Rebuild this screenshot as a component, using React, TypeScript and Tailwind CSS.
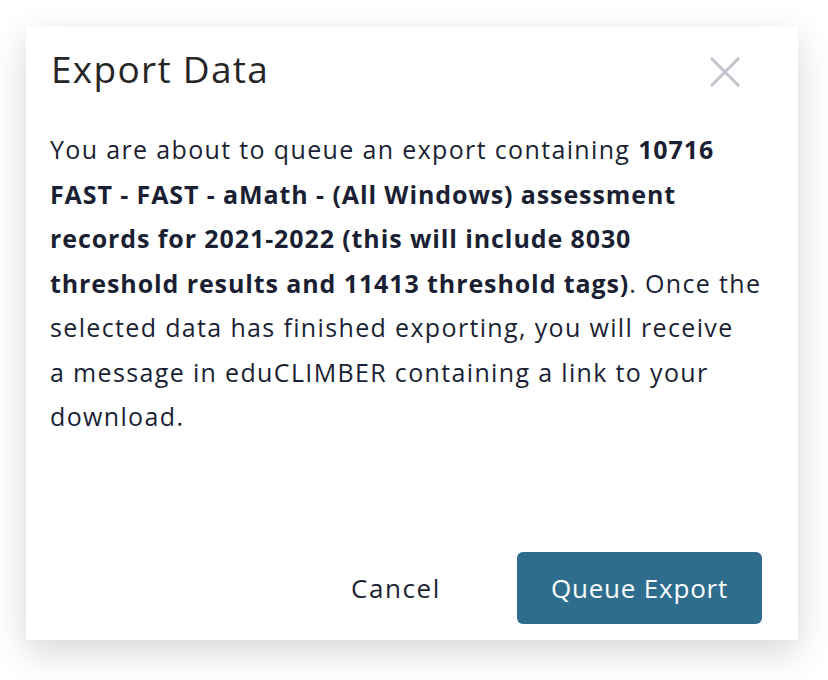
import React from 'react';

function CloseIcon() {
  return (
    <svg width="30" height="30" viewBox="0 0 30 30" fill="none" stroke="#c3c3d0" strokeWidth="3" strokeLinecap="square">
      <path d="M2 2L28 28M28 2L2 28" />
    </svg>
  );
}

export default function App() {
  return (
    <div className="min-h-[680px] w-[828px] bg-white pt-[27px] pl-[26px]" style={{ fontFamily: '"Open Sans", Lato, sans-serif' }}>
      <div className="flex h-[613px] w-[772px] flex-col bg-white shadow-[0_12px_34px_rgba(0,0,0,0.16)]">
        <div className="flex items-start justify-between pl-[25px] pr-[58px] pt-[18px]">
          <h2 className="text-[37px] leading-[48px] tracking-[1.3px] text-[#262626]">Export Data</h2>
          <button className="mt-[12px]" aria-label="Close">
            <CloseIcon />
          </button>
        </div>
        <p className="mt-[34px] pl-[24px] pr-[14px] text-[25px] leading-[44.5px] tracking-[1.35px] text-[#1b1f33]">
          You are about to queue an export containing <b className="font-bold tracking-[0.9px]">10716</b>
          <br />
          <b className="font-bold tracking-[0.9px]">
            FAST - FAST - aMath - (All Windows) assessment
            <br />
            records for 2021-2022 (this will include 8030
            <br />
            threshold results and 11413 threshold tags)
          </b>
          . Once the
          <br />
          selected data has finished exporting, you will receive
          <br />
          a message in eduCLIMBER containing a link to your
          <br />
          download.
        </p>
        <div className="mt-auto flex items-center justify-end gap-[40px] pb-[16px] pr-[36px]">
          <button className="px-[36px] py-[16px] text-[26px] tracking-[1.6px] text-[#1b1f33]">Cancel</button>
          <button className="h-[72px] w-[245px] rounded-[6px] bg-[#2e6d8e] text-[26px] tracking-[0.8px] text-white">
            Queue Export
          </button>
        </div>
      </div>
    </div>
  );
}
